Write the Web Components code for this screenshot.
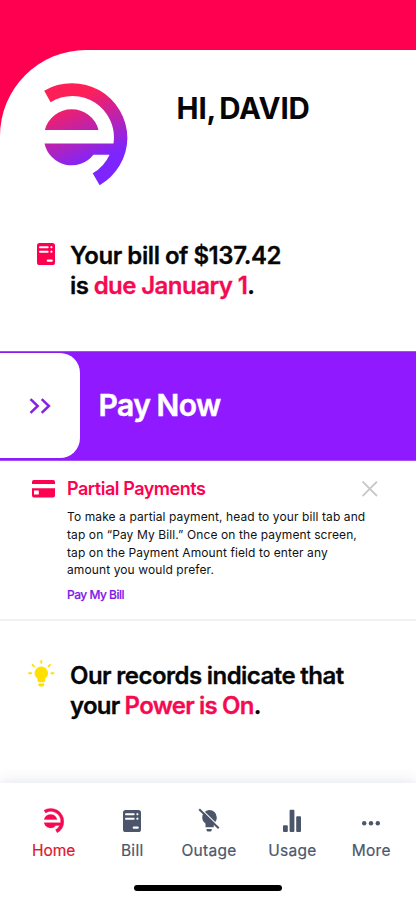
<!DOCTYPE html>
<html lang="en">
<head>
<meta charset="utf-8">
<title>Account home</title>
<style>
html,body{margin:0;background:#fff}
body{font-family:Inter,"Liberation Sans",sans-serif;color:#060606}
</style>
</head>
<body>
<account-app></account-app>

<script>
const define = (name, html) => customElements.define(name, class extends HTMLElement {
  constructor() {
    super();
    const t = document.createElement('template');
    t.innerHTML = html;
    this.attachShadow({ mode: 'open' }).append(t.content.cloneNode(true));
  }
});

const MARK = 'M44.2 90.7A55.300 55.300 0 0 1 127.4 138A55.300 55.300 0 0 1 99.6 185.2L92.7 173.3A41.3 41.3 0 0 0 109.6 154.7H93.4A27.7 27.7 0 0 1 44.5 143.5H113.5A41.5 41.5 0 0 0 50.6 102.2ZM44.9 130A27.7 27.7 0 0 1 98.5 130Z';
const BILL = '<svg viewBox="0 0 18 22" width="18" height="22"><path fill="currentColor" fill-rule="evenodd" d="M2.6 0H15.4A2.6 2.6 0 0 1 18 2.6V19.4A2.6 2.6 0 0 1 15.4 22H2.6A2.6 2.6 0 0 1 0 19.4V2.6A2.6 2.6 0 0 1 2.6 0ZM3 3.2a.7.7 0 0 0 0 2H10.7a.7.7 0 0 0 0-2ZM3 7.7a.7.7 0 0 0 0 2H10.7a.7.7 0 0 0 0-2ZM14.4 3.1a1.1 1.1 0 1 0 .01 0ZM14.4 7.6a1.1 1.1 0 1 0 .01 0ZM10.8 16.6a.9.9 0 0 0 0 2.2H14.7a.9.9 0 0 0 0-2.2Z"/></svg>';

define('brand-mark', `
<style>:host{display:block;width:84px;height:104px}svg{display:block}</style>
<svg viewBox="44 82 84 104" width="84" height="104">
  <defs><linearGradient id="g" gradientUnits="userSpaceOnUse" x1="72" y1="98" x2="98" y2="160">
    <stop offset="0" stop-color="#ff1f58"/><stop offset="1" stop-color="#7d25ff"/>
  </linearGradient></defs>
  <path fill="url(#g)" d="${MARK}"/>
</svg>`);

define('welcome-header', `
<style>
:host{display:block;padding-top:50px;height:350.500px;box-sizing:border-box;background:linear-gradient(#ff0050 0 145px,#fff 145px)}
.card{box-sizing:border-box;height:300.500px;background:#fff;border-radius:86px 0 0 0;padding:32px 0 0 44px;display:grid;grid-template-columns:132.5px 1fr;align-items:start;align-content:start}
.hi{font-weight:700;font-size:29.5px;line-height:36px;letter-spacing:-.15px;word-spacing:-3px;margin-top:8px;white-space:nowrap}
.note{grid-column:1/3;margin-left:-44px}
</style>
<div class="card"><brand-mark></brand-mark><div class="hi"><slot></slot></div><div class="note"><slot name="note"></slot></div></div>`);

define('status-line', `
<style>
:host{display:grid;grid-template-columns:70px 1fr;font-weight:600;font-size:24px;line-height:30px;white-space:nowrap;-webkit-text-stroke:.3px currentColor}
.i{display:flex;align-items:flex-start;color:#ff0050}
::slotted(div){letter-spacing:var(--track);word-spacing:-.3px}
</style>
<div class="i"><slot name="icon"></slot></div><div><slot></slot></div>`);

define('bill-icon', `<style>:host{display:block}svg{display:block}</style>${BILL}`);
define('bulb-icon', `<style>:host{display:block}svg{display:block}</style>
<svg viewBox="0 0 28 28" width="28" height="28"><g fill="#ffe000"><path d="M13.3 6.6a6.6 6.6 0 0 1 6.7 6.7c0 2.4-1.2 4-2.9 5.2v2.300a1.400 1.400 0 0 1-1.400 1.400h-4.800a1.400 1.400 0 0 1-1.400-1.400v-2.300c-1.700-1.200-2.900-2.800-2.900-5.200a6.600 6.600 0 0 1 6.700-6.700Z"/><path d="M10.300 23.500h6v1q0 1.900-1.900 1.900h-2.200q-1.900 0-1.900-1.900Z"/></g>
<path d="M13.300 1v1.800M4.600 4.900l1.400 1.400M22 4.900l-1.400 1.400M1 13.300h2.200M23.400 13.300h2.200" stroke="#ffe000" stroke-width="1.900" stroke-linecap="round"/></svg>`);

define('pay-slider', `
<style>
:host{display:flex;align-items:center;height:110px;background:#9019ff;box-sizing:border-box;box-shadow:inset 0 1px #a64eee,inset 0 -1px #a64eee,inset 0 2px #8b1cf0}
.tab{width:80px;height:105.5px;background:#fff;border-radius:0 20px 20px 0;display:flex;align-items:center;padding-left:29px;box-sizing:border-box}
.label{margin-left:18.5px;font-size:30px;font-weight:600;letter-spacing:-.5px;word-spacing:-1px;color:#fff;line-height:36px;margin-top:-1px;-webkit-text-stroke:.5px #fff}
</style>
<div class="tab"><svg viewBox="0 0 22 18" width="22" height="18"><path d="M1.500 2.200L8.700 9L1.500 15.800M12.700 2.200L19.900 9L12.700 15.800" fill="none" stroke="#8422e6" stroke-width="2.500"/></svg></div>
<div class="label"><slot></slot></div>`);

define('tip-panel', `
<style>
:host{display:grid;grid-template-columns:35px minmax(0,1fr) 16px;height:160.500px;box-sizing:border-box;padding:16.500px 38.500px 0 32px;border-bottom:2px solid #f1f1f2;background:#fff}
.card{display:block;margin-top:3px}
h2{margin:0;font-size:18px;line-height:24px;font-weight:600;letter-spacing:-.47px;color:#ff0050}
.x{margin-top:4px}
.text{font-size:12px;line-height:17.800px;margin-top:7px;white-space:nowrap;color:#111;letter-spacing:.1px}
.link{font-size:12px;line-height:16px;font-weight:500;letter-spacing:-.5px;color:#8118e8;margin-top:7.500px;-webkit-text-stroke:.2px #8118e8}
</style>
<svg class="card" viewBox="0 0 23 18" width="23" height="18"><path fill="#ff0050" fill-rule="evenodd" d="M1.800 0H21.200Q23 0 23 1.800V4H0V1.800Q0 0 1.800 0ZM0 8.200H23V15.400Q23 17.400 21 17.400H2Q0 17.400 0 15.400ZM2 10.600V14.400H6.800V10.600Z"/></svg>
<div><h2><slot name="title"></slot></h2><div class="text"><slot></slot></div><div class="link"><slot name="link"></slot></div></div>
<svg class="x" viewBox="0 0 16 16" width="16" height="16"><path d="M.5 .5L15 15M15 .5L.5 15" stroke="#c9c9cb" stroke-width="1.900"/></svg>`);

define('tab-item', `
<style>
:host{display:grid;grid-template-rows:26px 20px;justify-items:center;row-gap:7.500px;color:#4c566b;font-size:15.500px;line-height:20px;letter-spacing:.28px}
.i{display:flex;align-items:flex-end;height:26px}
::slotted(svg),::slotted(bill-icon){display:block}
div:last-child{-webkit-text-stroke:.2px currentColor}
</style>
<div class="i"><slot name="icon"></slot></div><div><slot></slot></div>`);

define('tab-bar', `
<style>
:host{display:block;height:117px;box-sizing:border-box;padding-top:24px;background:#fff;box-shadow:0 -3px 12px rgba(70,85,115,.12)}
nav{display:grid;grid-template-columns:79.200px 78px 75.600px 91.400px 66.200px;padding-left:14px;height:53px}
.bar{width:148.500px;height:5.500px;border-radius:3px;background:#000;margin:25px auto 0}
</style>
<nav><slot></slot></nav><div class="bar"></div>`);

define('account-app', `
<style>
:host{display:flex;flex-direction:column;width:416px;height:900px;overflow:hidden;background:#fff}
em{font-style:normal;color:#f50a52}
.bill{margin-top:55px}
.bill bill-icon{margin:2px 0 0 36.500px}
.power{margin-top:39.500px;flex:1}
.power bulb-icon{margin:-1px 0 0 28px}
welcome-header,pay-slider,tip-panel,tab-bar{flex:none}
</style>
<welcome-header>HI, DAVID
  <status-line class="bill" slot="note"><bill-icon slot="icon"></bill-icon>
    <div style="--track:-.4px">Your bill of $137.42</div><div style="--track:-.52px">is <em>due January 1</em>.</div></status-line>
</welcome-header>
<pay-slider>Pay Now</pay-slider>
<tip-panel><span slot="title">Partial Payments</span>To make a partial payment, head to your bill tab and<br>tap on “Pay My Bill.” Once on the payment screen,<br>tap on the Payment Amount field to enter any<br>amount you would prefer.<span slot="link">Pay My Bill</span></tip-panel>
<status-line class="power"><bulb-icon slot="icon"></bulb-icon>
  <div style="--track:-.53px">Our records indicate that</div><div style="--track:-.73px">your <em>Power is On</em>.</div></status-line>
<tab-bar>
  <tab-item style="color:#dc182c;letter-spacing:0">Home<svg slot="icon" viewBox="44 82 84 104" width="20" height="25"><path fill="#f50a52" stroke="#f50a52" stroke-width="1.500" d="${MARK}"/></svg></tab-item>
  <tab-item>Bill<bill-icon slot="icon" style="margin-bottom:1px"></bill-icon></tab-item>
  <tab-item>Outage<svg slot="icon" viewBox="0 0 22 26" width="22" height="26"><path fill="currentColor" d="M11 3a7.500 7.500 0 0 1 7.800 7.500c0 2.700-1.300 4.600-3 5.900v3.900H7.500v-3.900C5.500 15.100 4.200 13.100 4.200 10.500A7.500 7.500 0 0 1 11 3ZM8.500 22h5.200v.9q0 1.600-1.600 1.600H10.100q-1.600 0-1.600-1.600Z"/><path d="M2.800 1.600L21.400 20" stroke="#fff" stroke-width="1.300"/><path d="M1.200 2.300L20.700 21.300" stroke="currentColor" stroke-width="2"/></svg></tab-item>
  <tab-item>Usage<svg slot="icon" viewBox="0 0 18 24" width="18" height="24"><g fill="currentColor"><rect y="16.300" width="4.800" height="6.700" rx="1"/><rect x="6.600" y=".8" width="4.800" height="22.200" rx="1"/><rect x="13.200" y="7.300" width="4.800" height="15.700" rx="1"/></g></svg></tab-item>
  <tab-item>More<svg slot="icon" viewBox="0 0 18 24" width="18" height="24"><g fill="currentColor"><circle cx="2.200" cy="14.300" r="2.200"/><circle cx="9" cy="14.300" r="2.200"/><circle cx="15.800" cy="14.300" r="2.200"/></g></svg></tab-item>
</tab-bar>`);
</script>
</body>
</html>
